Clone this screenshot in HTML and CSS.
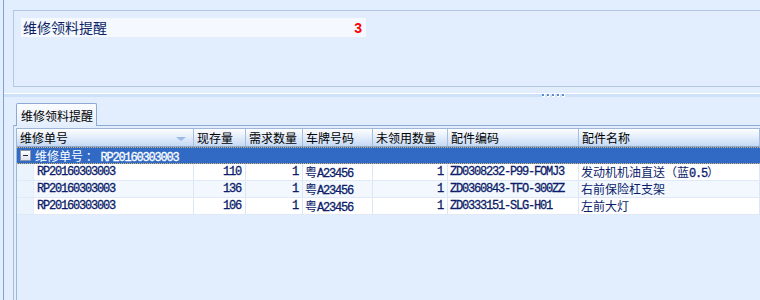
FILE: index.html
```html
<!DOCTYPE html>
<html lang="zh-CN">
<head>
<meta charset="UTF-8">
<title>维修领料提醒</title>
<link rel="stylesheet" href="styles.css">
</head>
<body>
<div class="frame">
    <div class="top-panel">
        <div class="notice">
            <span class="notice-title">维修领料提醒</span>
            <span class="notice-count">3</span>
        </div>
    </div>

    <div class="splitter">
        <div class="grip"><i></i><i></i><i></i><i></i><i></i></div>
    </div>

    <div class="tab-page">
        <div class="tab-strip">
            <div class="tab">维修领料提醒</div>
        </div>
        <div class="tab-body">
            <div class="grid">
                <div class="row head">
                    <div class="cell">维修单号<span class="sort"></span></div>
                    <div class="cell">现存量</div>
                    <div class="cell">需求数量</div>
                    <div class="cell">车牌号码</div>
                    <div class="cell">未领用数量</div>
                    <div class="cell">配件编码</div>
                    <div class="cell">配件名称</div>
                </div>
                <div class="group">
                    <span class="expand"></span>
                    <span>维修单号 ： <span class="lat">RP20160303003</span></span>
                </div>
                <div class="row data">
                    <div class="cell first"><span class="indent"></span><span class="txt lat">RP20160303003</span></div>
                    <div class="cell num lat">110</div>
                    <div class="cell num lat">1</div>
                    <div class="cell">粤<span class="lat">A23456</span></div>
                    <div class="cell num lat">1</div>
                    <div class="cell lat">ZD0308232-P99-FOMJ3</div>
                    <div class="cell">发动机机油直送（蓝<span class="lat">0.5</span>）</div>
                </div>
                <div class="row data alt">
                    <div class="cell first"><span class="indent"></span><span class="txt lat">RP20160303003</span></div>
                    <div class="cell num lat">136</div>
                    <div class="cell num lat">1</div>
                    <div class="cell">粤<span class="lat">A23456</span></div>
                    <div class="cell num lat">1</div>
                    <div class="cell lat">ZD0360843-TFO-300ZZ</div>
                    <div class="cell">右前保险杠支架</div>
                </div>
                <div class="row data">
                    <div class="cell first"><span class="indent"></span><span class="txt lat">RP20160303003</span></div>
                    <div class="cell num lat">106</div>
                    <div class="cell num lat">1</div>
                    <div class="cell">粤<span class="lat">A23456</span></div>
                    <div class="cell num lat">1</div>
                    <div class="cell lat">ZD0333151-SLG-H01</div>
                    <div class="cell">左前大灯</div>
                </div>
            </div>
        </div>
    </div>
</div>
</body>
</html>
```

FILE: styles.css
```css
body, html {
    margin: 0;
    height: 100%;
    overflow: hidden;
    background: #e2edfd;
    font-family: "Noto Sans CJK SC", "DejaVu Sans", sans-serif;
    font-size: 12px;
}
.frame {
    margin-left: 3px;
    height: 300px;
    border-left: 1px solid #7fa2d3;
    display: flex;
    flex-direction: column;
}

/* top panel */
.top-panel {
    margin: 10px 0 0 9px;
    height: 68px;
    border: 1px solid #b3c7e3;
    border-right: none;
    padding: 7px 0 0 7px;
}
.notice {
    width: 345px;
    height: 19px;
    background: #f5f9ff;
    display: flex;
    align-items: center;
    justify-content: space-between;
    box-sizing: border-box;
    padding: 0 4px 0 2px;
}
.notice-title {
    color: #0c1f66;
    font-size: 14px;
    line-height: 19px;
}
.notice-count {
    color: #f00;
    font-weight: bold;
    font-size: 14px;
    font-family: "Liberation Sans", sans-serif;
}

/* splitter */
.splitter {
    margin-top: 6px;
    height: 3px;
    border-top: 1px solid #fff;
    background: #cfe1f8;
    display: flex;
    justify-content: center;
    padding-left: 342px;
}
.grip {
    display: flex;
    gap: 2px;
}
.grip i {
    width: 2px;
    height: 2px;
    background: #5b8bd6;
    border-right: 1px solid #fff;
    border-bottom: 1px solid #fff;
}

/* tab page */
.tab-page {
    margin: 6px 0 0 9px;
    flex: 1;
    display: flex;
    flex-direction: column;
}
.tab-strip {
    display: flex;
    padding-left: 3px;
}
.tab {
    width: 81px;
    height: 23px;
    box-sizing: border-box;
    border: 1px solid #8eaad2;
    border-bottom: none;
    border-radius: 2px 2px 0 0;
    background: linear-gradient(#fbfdff, #e4eefc);
    padding: 3px 0 0 4px;
    color: #000;
    position: relative;
    margin-bottom: -1px;
    z-index: 1;
}
.tab-body {
    flex: 1;
    border-left: 1px solid #a9bddb;
    border-top: 1px solid #8eaad2;
    padding: 2px 0 0 2px;
}

/* grid */
.grid {
    height: 100%;
    border-left: 1px solid #9fb6d8;
    border-top: 1px solid #9fb6d8;
}
.row {
    display: grid;
    grid-template-columns: 177px 52px 57px 70px 75px 131px 1fr;
}
.cell {
    border-right: 1px solid #dce7f6;
    white-space: nowrap;
    overflow: hidden;
    padding: 0 2px;
    position: relative;
}
.lat {
    font-family: "Liberation Mono", monospace;
    font-size: 12px;
    letter-spacing: -1.2px;
    -webkit-text-stroke: 0.3px currentColor;
}
.head {
    height: 18px;
    background: linear-gradient(#fdfeff, #e8f0fc 40%, #c5d9f4);
    border-bottom: 1px solid #8ea9d0;
    box-sizing: border-box;
}
.head .cell {
    border-right: 1px solid #a6bde0;
    line-height: 17px;
    padding-left: 3px;
    color: #000;
}
.sort {
    position: absolute;
    right: 7px;
    top: 8px;
    border-left: 5px solid transparent;
    border-right: 5px solid transparent;
    border-top: 4px solid #9bbbe6;
}
.group {
    height: 17px;
    background: #316ac5;
    border-top: 1px dotted #d8b46c;
    border-bottom: 1px dotted #d8b46c;
    box-sizing: border-box;
    display: flex;
    align-items: center;
    gap: 4px;
    padding-left: 3px;
    color: #fff;
}
.expand {
    width: 11px;
    height: 11px;
    box-sizing: border-box;
    border: 1px solid #8b96a8;
    background: linear-gradient(#ffffff, #dde3ec);
    position: relative;
}
.expand::after {
    content: "";
    position: absolute;
    left: 2px;
    top: 4px;
    width: 5px;
    height: 1px;
    background: #1a2a4a;
}
.data {
    height: 17px;
    background: #fff;
    border-bottom: 1px solid #dfe9f7;
    box-sizing: border-box;
    color: #0b1c6a;
    line-height: 16px;
}
.data.alt {
    background: #f2f8fe;
}
.data .first {
    padding: 0;
    display: flex;
}
.indent {
    width: 16px;
    background: #ebf3fd;
    border-right: 1px solid #e4edf9;
}
.txt {
    padding-left: 3px;
}
.num {
    text-align: right;
    padding-right: 4px;
}
```
